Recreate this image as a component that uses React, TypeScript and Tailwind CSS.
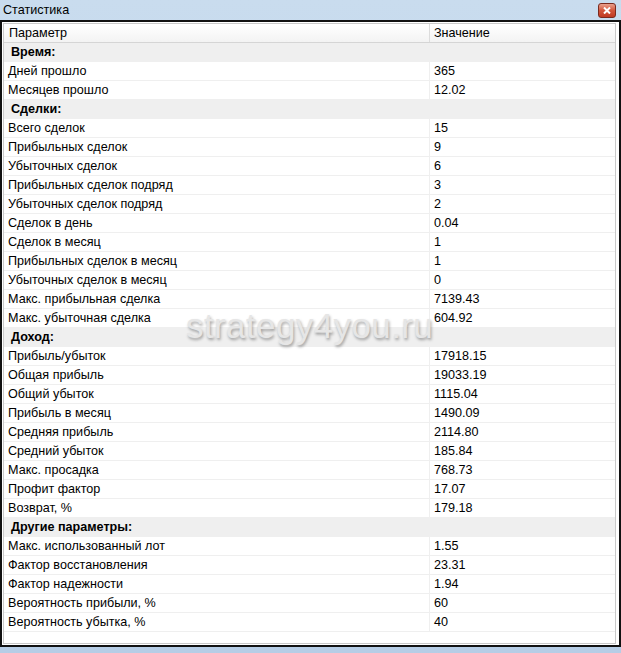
import React from "react";

type Row = { label: string; value?: string; section?: boolean };

const rows: Row[] = [
  { label: "Время:", section: true },
  { label: "Дней прошло", value: "365" },
  { label: "Месяцев прошло", value: "12.02" },
  { label: "Сделки:", section: true },
  { label: "Всего сделок", value: "15" },
  { label: "Прибыльных сделок", value: "9" },
  { label: "Убыточных сделок", value: "6" },
  { label: "Прибыльных сделок подряд", value: "3" },
  { label: "Убыточных сделок подряд", value: "2" },
  { label: "Сделок в день", value: "0.04" },
  { label: "Сделок в месяц", value: "1" },
  { label: "Прибыльных сделок в месяц", value: "1" },
  { label: "Убыточных сделок в месяц", value: "0" },
  { label: "Макс. прибыльная сделка", value: "7139.43" },
  { label: "Макс. убыточная сделка", value: "604.92" },
  { label: "Доход:", section: true },
  { label: "Прибыль/убыток", value: "17918.15" },
  { label: "Общая прибыль", value: "19033.19" },
  { label: "Общий убыток", value: "1115.04" },
  { label: "Прибыль в месяц", value: "1490.09" },
  { label: "Средняя прибыль", value: "2114.80" },
  { label: "Средний убыток", value: "185.84" },
  { label: "Макс. просадка", value: "768.73" },
  { label: "Профит фактор", value: "17.07" },
  { label: "Возврат, %", value: "179.18" },
  { label: "Другие параметры:", section: true },
  { label: "Макс. использованный лот", value: "1.55" },
  { label: "Фактор восстановления", value: "23.31" },
  { label: "Фактор надежности", value: "1.94" },
  { label: "Вероятность прибыли, %", value: "60" },
  { label: "Вероятность убытка, %", value: "40" },
];

export default function App() {
  return (
    <div
      className="relative flex h-[653px] w-[621px] flex-col overflow-hidden bg-gradient-to-b from-[#c9dcee] to-[#b6cde6] text-[12.6px] text-black"
      style={{ fontFamily: '"Liberation Sans", Arial, sans-serif' }}
    >
      {/* title bar */}
      <div className="flex h-[20px] shrink-0 items-center justify-between pl-[3px] pr-[5px]">
        <span className="text-[12.6px] leading-none text-black">Статистика</span>
        <div className="flex h-[15px] w-[18px] items-center justify-center rounded-[3px] border border-[#7a2a1e] bg-gradient-to-b from-[#e8a08e] via-[#d2553b] to-[#c03a22]">
          <svg width="8" height="7" viewBox="0 0 8 7">
            <path d="M1 0.5 L7 6.5 M7 0.5 L1 6.5" stroke="#fff" strokeWidth="2" />
          </svg>
        </div>
      </div>

      {/* window frame */}
      <div className="mb-[6px] flex flex-1 flex-col border-2 border-[#111] bg-white p-px pr-[3px]">
        <div className="flex flex-1 flex-col border border-[#c9c9c9] bg-white">
          {/* header */}
          <div className="flex h-[19px] shrink-0 border-b border-[#d5d5d5] bg-gradient-to-b from-white to-[#f3f3f3]">
            <div className="flex w-[426px] items-center border-r border-[#dcdcdc] pl-[5px]">
              Параметр
            </div>
            <div className="flex flex-1 items-center pl-[4px]">Значение</div>
          </div>

          {rows.map((r) =>
            r.section ? (
              <div
                key={r.label}
                className="flex h-[19px] shrink-0 items-center bg-[#efefef] pl-[7px] font-bold"
              >
                {r.label}
              </div>
            ) : (
              <div
                key={r.label}
                className="flex h-[19px] shrink-0 border-b border-[#efefef]"
              >
                <div className="flex w-[426px] items-center border-r border-[#efefef] pl-[4px]">
                  {r.label}
                </div>
                <div className="flex flex-1 items-center pl-[4px]">{r.value}</div>
              </div>
            )
          )}
        </div>
      </div>

      {/* watermark */}
      <div
        className="pointer-events-none absolute left-[186px] top-[308px] text-[35px] leading-none tracking-[0.4px] text-[#e6e6e6]"
        style={{ textShadow: "1px 2px 3px rgba(0,0,0,0.35)" }}
      >
        strategy4you.ru
      </div>
    </div>
  );
}
